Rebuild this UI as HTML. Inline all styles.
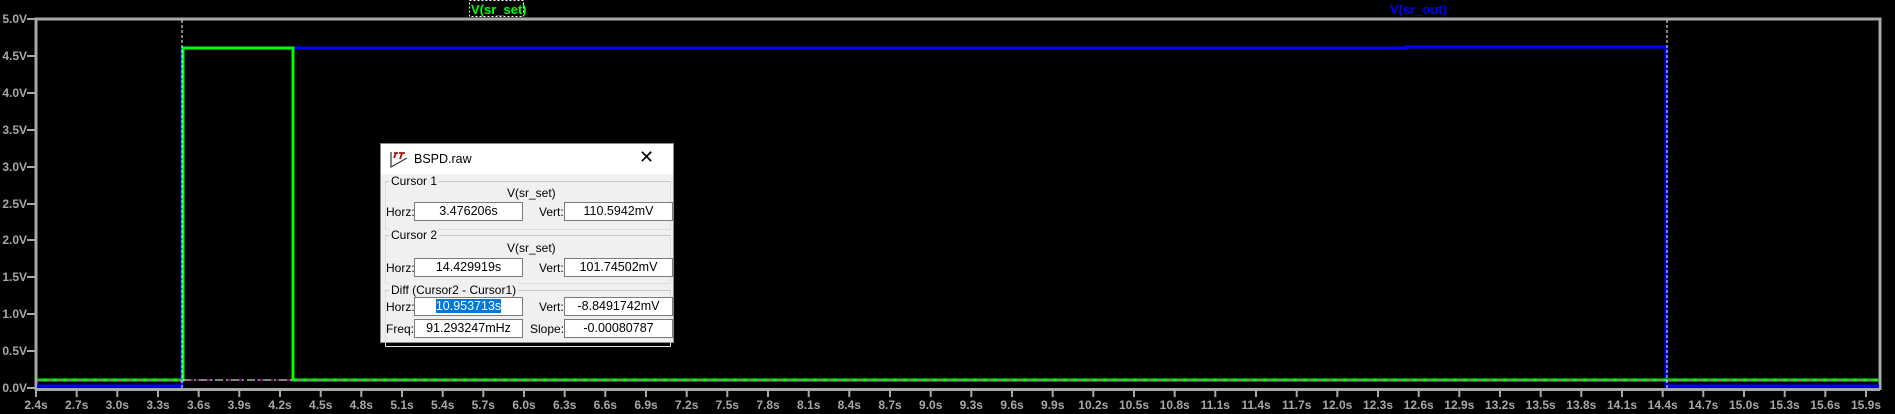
<!DOCTYPE html>
<html><head><meta charset="utf-8"><style>
html,body{margin:0;padding:0;background:#000;width:1895px;height:414px;overflow:hidden;font-family:"Liberation Sans",Arial,sans-serif}
svg{position:absolute;left:0;top:0}
.dlg{position:absolute;left:380px;top:143px;width:294px;height:200px;background:#f0f0f0;border:1px solid #888;box-sizing:border-box;font-size:12px;color:#000}
.title{position:absolute;left:0;top:0;right:0;height:30px;background:#fff}
.t{position:absolute;white-space:nowrap}
.box{position:absolute;background:#fff;border:1px solid #7a7a7a;height:19px;box-sizing:border-box;text-align:center;line-height:17px;font-size:12.5px}
.grp{position:absolute;left:4px;right:2px;border:1px solid #dcdcdc;border-top:1px solid #c8c8c8}
</style></head><body>
<svg width="1895" height="414" xmlns="http://www.w3.org/2000/svg">
<g stroke="#a8a8a8" stroke-width="3" fill="none">
<polyline points="36,390 36,19 1880,19 1880,390"/>
<line x1="36" y1="389.5" x2="1880" y2="389.5"/>
</g>
<g stroke="#a8a8a8" stroke-width="2">
<line x1="27" y1="19" x2="36" y2="19"/><line x1="27" y1="56" x2="36" y2="56"/><line x1="27" y1="93" x2="36" y2="93"/><line x1="27" y1="130" x2="36" y2="130"/><line x1="27" y1="167" x2="36" y2="167"/><line x1="27" y1="204" x2="36" y2="204"/><line x1="27" y1="240" x2="36" y2="240"/><line x1="27" y1="277" x2="36" y2="277"/><line x1="27" y1="314" x2="36" y2="314"/><line x1="27" y1="351" x2="36" y2="351"/><line x1="27" y1="388" x2="36" y2="388"/>
</g>
<g fill="#a8a8a8" font-family="Liberation Sans, Arial, sans-serif" font-size="12" font-weight="bold" text-anchor="end">
<text x="27" y="23">5.0V</text><text x="27" y="60">4.5V</text><text x="27" y="97">4.0V</text><text x="27" y="134">3.5V</text><text x="27" y="171">3.0V</text><text x="27" y="208">2.5V</text><text x="27" y="244">2.0V</text><text x="27" y="281">1.5V</text><text x="27" y="318">1.0V</text><text x="27" y="355">0.5V</text><text x="27" y="392">0.0V</text>
</g>
<g stroke="#a8a8a8" stroke-width="2" id="xt">
<line x1="36" y1="390" x2="36" y2="397"/><line x1="76.7" y1="390" x2="76.7" y2="397"/><line x1="117.3" y1="390" x2="117.3" y2="397"/><line x1="158" y1="390" x2="158" y2="397"/><line x1="198.7" y1="390" x2="198.7" y2="397"/><line x1="239.3" y1="390" x2="239.3" y2="397"/><line x1="280" y1="390" x2="280" y2="397"/><line x1="320.7" y1="390" x2="320.7" y2="397"/><line x1="361.3" y1="390" x2="361.3" y2="397"/><line x1="402" y1="390" x2="402" y2="397"/><line x1="442.7" y1="390" x2="442.7" y2="397"/><line x1="483.3" y1="390" x2="483.3" y2="397"/><line x1="524" y1="390" x2="524" y2="397"/><line x1="564.7" y1="390" x2="564.7" y2="397"/><line x1="605.3" y1="390" x2="605.3" y2="397"/><line x1="646" y1="390" x2="646" y2="397"/><line x1="686.7" y1="390" x2="686.7" y2="397"/><line x1="727.3" y1="390" x2="727.3" y2="397"/><line x1="768" y1="390" x2="768" y2="397"/><line x1="808.7" y1="390" x2="808.7" y2="397"/><line x1="849.3" y1="390" x2="849.3" y2="397"/><line x1="890" y1="390" x2="890" y2="397"/><line x1="930.7" y1="390" x2="930.7" y2="397"/><line x1="971.3" y1="390" x2="971.3" y2="397"/><line x1="1012" y1="390" x2="1012" y2="397"/><line x1="1052.7" y1="390" x2="1052.7" y2="397"/><line x1="1093.3" y1="390" x2="1093.3" y2="397"/><line x1="1134" y1="390" x2="1134" y2="397"/><line x1="1174.7" y1="390" x2="1174.7" y2="397"/><line x1="1215.3" y1="390" x2="1215.3" y2="397"/><line x1="1256" y1="390" x2="1256" y2="397"/><line x1="1296.7" y1="390" x2="1296.7" y2="397"/><line x1="1337.3" y1="390" x2="1337.3" y2="397"/><line x1="1378" y1="390" x2="1378" y2="397"/><line x1="1418.7" y1="390" x2="1418.7" y2="397"/><line x1="1459.3" y1="390" x2="1459.3" y2="397"/><line x1="1500" y1="390" x2="1500" y2="397"/><line x1="1540.7" y1="390" x2="1540.7" y2="397"/><line x1="1581.3" y1="390" x2="1581.3" y2="397"/><line x1="1622" y1="390" x2="1622" y2="397"/><line x1="1662.7" y1="390" x2="1662.7" y2="397"/><line x1="1703.3" y1="390" x2="1703.3" y2="397"/><line x1="1744" y1="390" x2="1744" y2="397"/><line x1="1784.7" y1="390" x2="1784.7" y2="397"/><line x1="1825.3" y1="390" x2="1825.3" y2="397"/><line x1="1866" y1="390" x2="1866" y2="397"/>
</g>
<g fill="#a8a8a8" font-family="Liberation Sans, Arial, sans-serif" font-size="12" font-weight="bold" text-anchor="middle">
<text x="36" y="409">2.4s</text><text x="76.7" y="409">2.7s</text><text x="117.3" y="409">3.0s</text><text x="158" y="409">3.3s</text><text x="198.7" y="409">3.6s</text><text x="239.3" y="409">3.9s</text><text x="280" y="409">4.2s</text><text x="320.7" y="409">4.5s</text><text x="361.3" y="409">4.8s</text><text x="402" y="409">5.1s</text><text x="442.7" y="409">5.4s</text><text x="483.3" y="409">5.7s</text><text x="524" y="409">6.0s</text><text x="564.7" y="409">6.3s</text><text x="605.3" y="409">6.6s</text><text x="646" y="409">6.9s</text><text x="686.7" y="409">7.2s</text><text x="727.3" y="409">7.5s</text><text x="768" y="409">7.8s</text><text x="808.7" y="409">8.1s</text><text x="849.3" y="409">8.4s</text><text x="890" y="409">8.7s</text><text x="930.7" y="409">9.0s</text><text x="971.3" y="409">9.3s</text><text x="1012" y="409">9.6s</text><text x="1052.7" y="409">9.9s</text><text x="1093.3" y="409">10.2s</text><text x="1134" y="409">10.5s</text><text x="1174.7" y="409">10.8s</text><text x="1215.3" y="409">11.1s</text><text x="1256" y="409">11.4s</text><text x="1296.7" y="409">11.7s</text><text x="1337.3" y="409">12.0s</text><text x="1378" y="409">12.3s</text><text x="1418.7" y="409">12.6s</text><text x="1459.3" y="409">12.9s</text><text x="1500" y="409">13.2s</text><text x="1540.7" y="409">13.5s</text><text x="1581.3" y="409">13.8s</text><text x="1622" y="409">14.1s</text><text x="1662.7" y="409">14.4s</text><text x="1703.3" y="409">14.7s</text><text x="1744" y="409">15.0s</text><text x="1784.7" y="409">15.3s</text><text x="1825.3" y="409">15.6s</text><text x="1866" y="409">15.9s</text>
</g>
<polyline points="37,386 182,386 182,48 1406,48 1406,47 1666,47 1666,386 1879,386" fill="none" stroke="#0000ff" stroke-width="3"/>
<polyline points="37,380 183,380 183,48 293,48 293,380 1879,380" fill="none" stroke="#00ff00" stroke-width="3"/>
<line x1="37" y1="380" x2="1879" y2="380" stroke="#ff00ff" stroke-width="1" stroke-dasharray="6,4"/>
<line x1="183" y1="380" x2="293" y2="380" stroke="#fff" stroke-width="1" stroke-dasharray="8,3,2,3"/>
<line x1="182" y1="20" x2="182" y2="389" stroke="#fff" stroke-width="1" stroke-dasharray="3,2"/>
<line x1="1667" y1="20" x2="1667" y2="389" stroke="#fff" stroke-width="1" stroke-dasharray="3,2"/>
<rect x="469.5" y="0.5" width="54" height="16" fill="none" stroke="#fff" stroke-width="1" stroke-dasharray="2,2"/>
<text x="471" y="14" fill="#00ff00" font-family="Liberation Sans, Arial, sans-serif" font-size="13" font-weight="bold">V(sr_set)</text>
<text x="1390" y="14" fill="#0000ff" font-family="Liberation Sans, Arial, sans-serif" font-size="13" font-weight="bold">V(sr_out)</text>
</svg>
<div class="dlg">
<div class="title">
<svg width="20" height="20" style="left:8px;top:5px"><path d="M2,3 L2,18 L18,9" fill="none" stroke="#333" stroke-width="1.2"/><path d="M5,4 L9,4 M7,4 L5,9 M10,4 L16,4 M13,4 L11,10" stroke="#b01010" stroke-width="1.8" fill="none"/></svg>
<span class="t" style="left:33px;top:8px;font-size:12.5px">BSPD.raw</span>
<span class="t" style="left:258px;top:3px;font-size:18px;font-weight:300">✕</span>
</div>
<div class="grp" style="top:37px;height:47px"></div>
<div class="grp" style="top:91px;height:47px"></div>
<div class="grp" style="top:146px;height:55px;bottom:0"></div>
<span class="t" style="left:8px;top:30px;background:#f0f0f0;padding:0 2px">Cursor 1</span>
<span class="t" style="left:126px;top:42px">V(sr_set)</span>
<span class="t" style="left:5px;top:61px">Horz:</span><div class="box" style="left:33px;top:58px;width:109px">3.476206s</div>
<span class="t" style="left:158px;top:61px">Vert:</span><div class="box" style="left:183px;top:58px;width:109px">110.5942mV</div>
<span class="t" style="left:8px;top:84px;background:#f0f0f0;padding:0 2px">Cursor 2</span>
<span class="t" style="left:126px;top:97px">V(sr_set)</span>
<span class="t" style="left:5px;top:117px">Horz:</span><div class="box" style="left:33px;top:114px;width:109px">14.429919s</div>
<span class="t" style="left:158px;top:117px">Vert:</span><div class="box" style="left:183px;top:114px;width:109px">101.74502mV</div>
<span class="t" style="left:8px;top:139px;background:#f0f0f0;padding:0 2px">Diff (Cursor2 - Cursor1)</span>
<span class="t" style="left:5px;top:156px">Horz:</span><div class="box" style="left:33px;top:153px;width:109px"><span style="background:#0078d7;color:#fff">10.953713s</span></div>
<span class="t" style="left:158px;top:156px">Vert:</span><div class="box" style="left:183px;top:153px;width:109px">-8.8491742mV</div>
<span class="t" style="left:5px;top:178px">Freq:</span><div class="box" style="left:33px;top:175px;width:109px">91.293247mHz</div>
<span class="t" style="left:149px;top:178px">Slope:</span><div class="box" style="left:183px;top:175px;width:109px">-0.00080787</div>
</div>
</body></html>
